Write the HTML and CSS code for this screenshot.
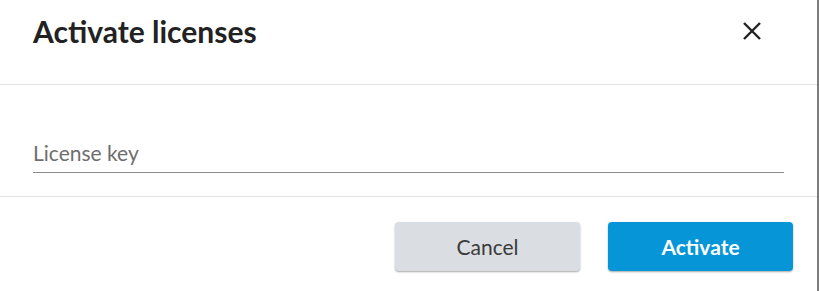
FILE: index.html
```html
<!DOCTYPE html>
<html>
<head>
<meta charset="utf-8">
<link rel="stylesheet" href="styles.css">
</head>
<body>
<div class="dialog">
  <div class="header">
    <h1 class="title">Activate licenses</h1>
    <button class="close" aria-label="Close">
      <svg width="20" height="20" viewBox="0 0 20 20"><path d="M2 2 L18 18 M18 2 L2 18" stroke="#222" stroke-width="2.4" fill="none"/></svg>
    </button>
  </div>
  <div class="body">
    <div class="field">
      <span class="placeholder">License key</span>
    </div>
  </div>
  <div class="footer">
    <button class="btn btn-cancel">Cancel</button>
    <button class="btn btn-primary">Activate</button>
  </div>
</div>
</body>
</html>
```
FILE: styles.css
```css
html, body {
  margin: 0;
  padding: 0;
  background: #ffffff;
}
body {
  font-family: "Lato", "Liberation Sans", sans-serif;
}
.dialog {
  width: 817px;
  height: 291px;
  border-right: 2px solid #7d7d7d;
  background: #ffffff;
  display: flex;
  flex-direction: column;
}
.header {
  height: 84px;
  border-bottom: 1px solid #e2e2e2;
  display: flex;
  align-items: center;
  justify-content: space-between;
  padding: 0 55px 0 33px;
  box-sizing: content-box;
}
.title {
  margin: 0;
  margin-top: -22px;
  font-size: 30px;
  font-weight: 700;
  color: #222222;
}
.close {
  border: 0;
  background: none;
  padding: 0;
  width: 20px;
  height: 20px;
  margin-top: -22px;
  display: flex;
}
.body {
  height: 111px;
  border-bottom: 1px solid #e2e2e2;
  padding: 0 33px;
  display: flex;
  align-items: flex-end;
}
.field {
  flex: 1;
  border-bottom: 1px solid #8a8a8a;
  height: 40px;
  margin-bottom: 23px;
  display: flex;
  align-items: center;
}
.placeholder {
  font-size: 21px;
  color: #6e6e6e;
}
.footer {
  display: flex;
  justify-content: flex-end;
  gap: 28px;
  padding: 25px 24px 0 0;
}
.btn {
  width: 185px;
  height: 49px;
  border: 0;
  border-radius: 4px;
  font-family: "Lato", "Liberation Sans", sans-serif;
  font-size: 21px;
  box-shadow: 0 1px 2px rgba(0, 0, 0, 0.35);
}
.btn-cancel {
  background: #dadee2;
  color: #3a3a3a;
}
.btn-primary {
  background: #0696d7;
  color: #ffffff;
  font-weight: 700;
}
```
